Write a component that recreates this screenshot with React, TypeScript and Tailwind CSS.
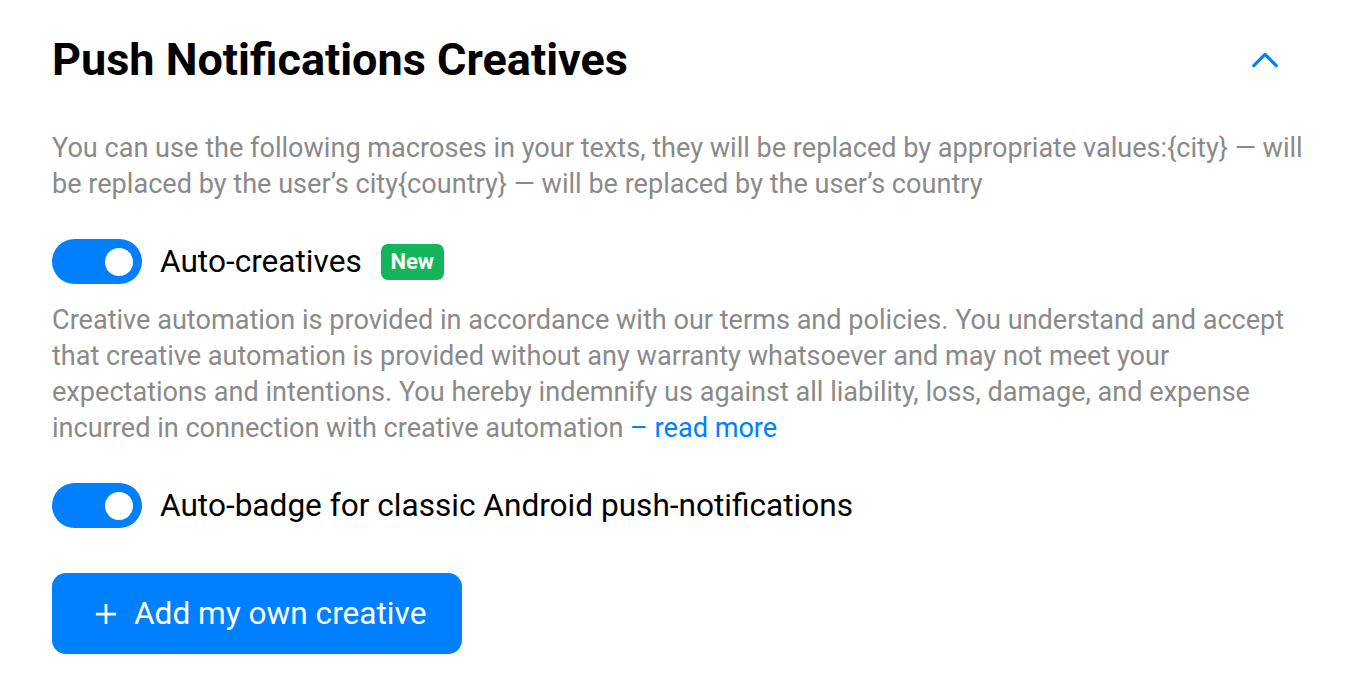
import { FC, useState } from 'react';

const Toggle: FC<{ on: boolean; onChange: () => void }> = ({ on, onChange }) => (
  <button
    onClick={onChange}
    className={`relative w-[90px] h-[45px] shrink-0 rounded-full transition-colors ${on ? 'bg-[#0080ff]' : 'bg-[#d0d0d0]'}`}
  >
    <span
      className={`absolute top-[8.5px] w-[28px] h-[28px] rounded-full bg-white transition-all ${on ? 'left-[53px]' : 'left-[9px]'}`}
    />
  </button>
);

export default function App() {
  const [autoCreatives, setAutoCreatives] = useState(true);
  const [autoBadge, setAutoBadge] = useState(true);

  return (
    <div className="min-h-screen bg-white font-['Roboto',sans-serif] pl-[52px] pr-[40px] pt-[34px]">
      <div className="flex items-center justify-between">
        <h2 className="text-[45px] leading-[52px] font-bold text-black">Push Notifications Creatives</h2>
        <button className="mr-[32px] text-[#0080ff]">
          <svg width="30" height="30" viewBox="0 0 24 24" fill="none" stroke="currentColor" strokeWidth="2.6" strokeLinecap="round" strokeLinejoin="round">
            <path d="M3 16.5 L12 7.5 L21 16.5" />
          </svg>
        </button>
      </div>

      <p className="mt-[44px] text-[27.1px] leading-[36px] text-[#8a8a8a]">
        You can use the following macroses in your texts, they will be replaced by appropriate values:{'{city}'} — will be replaced by the user’s city{'{country}'} — will be replaced by the user’s country
      </p>

      <div className="mt-[37px] flex items-center">
        <Toggle on={autoCreatives} onChange={() => setAutoCreatives(!autoCreatives)} />
        <span className="ml-[18px] text-[31.6px] leading-[40px] text-black">Auto-creatives</span>
        <span className="ml-[19px] rounded-[7px] bg-[#13b45a] w-[63px] h-[36px] flex items-center justify-center text-[22px] font-bold text-white">New</span>
      </div>

      <p className="mt-[18px] pr-[12px] text-[27.1px] leading-[36px] text-[#8a8a8a]">
        Creative automation is provided in accordance with our terms and policies. You understand and accept that creative automation is provided without any warranty whatsoever and may not meet your expectations and intentions. You hereby indemnify us against all liability, loss, damage, and expense incurred in connection with creative automation{' '}
        <a href="#" className="text-[#0080ff]">– read more</a>
      </p>

      <div className="mt-[37px] flex items-center">
        <Toggle on={autoBadge} onChange={() => setAutoBadge(!autoBadge)} />
        <span className="ml-[18px] text-[31.6px] leading-[40px] text-black">Auto-badge for classic Android push-notifications</span>
      </div>

      <button className="mt-[45px] w-[410px] h-[81px] rounded-[14px] bg-[#0080ff] flex items-center pl-[43px] text-white">
        <svg width="22" height="22" viewBox="0 0 24 24" fill="none" stroke="currentColor" strokeWidth="3">
          <path d="M12 1 V23 M1 12 H23" />
        </svg>
        <span className="ml-[17px] text-[31.6px] leading-[40px]">Add my own creative</span>
      </button>
    </div>
  );
}
